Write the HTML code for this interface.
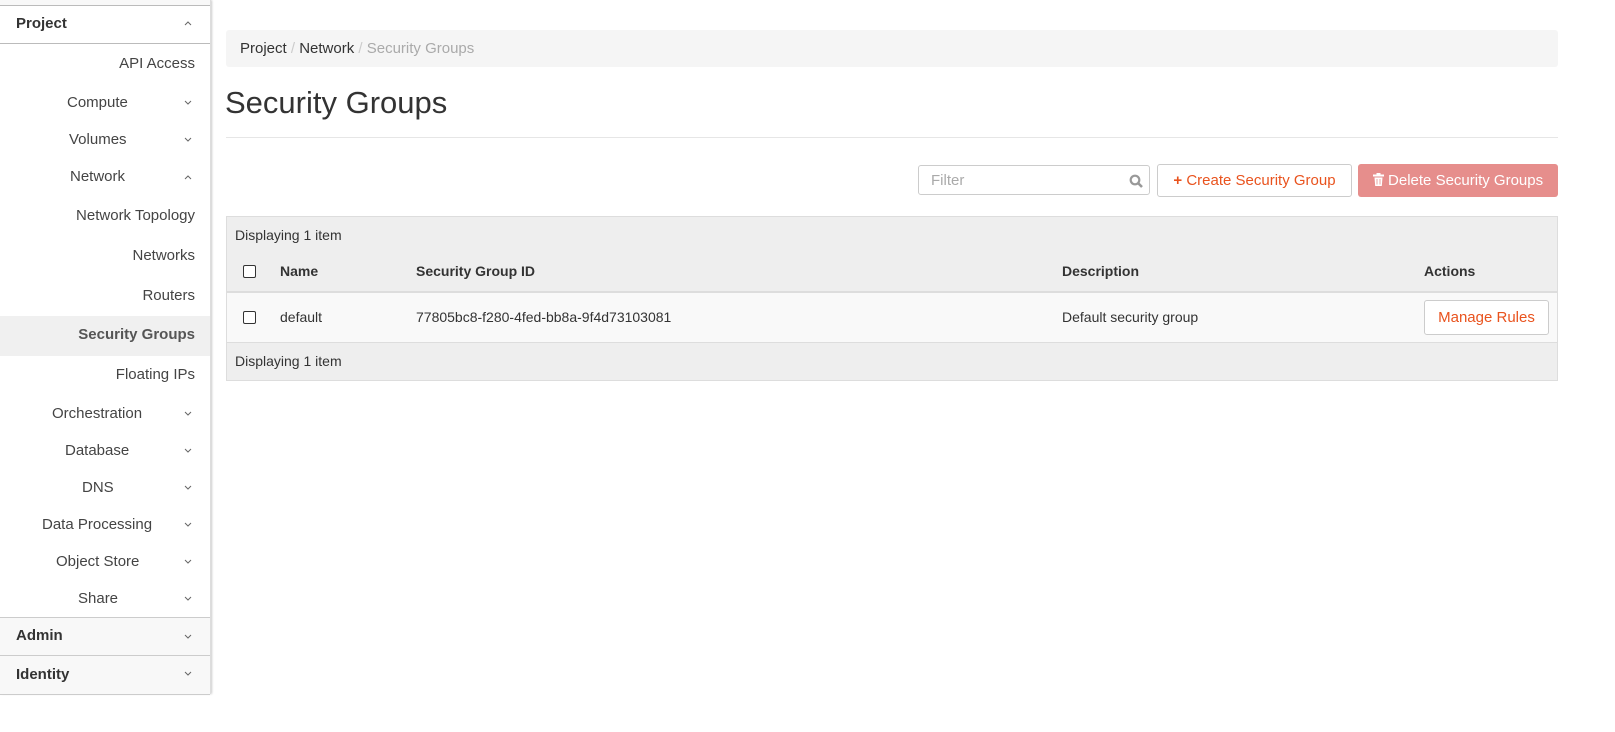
<!DOCTYPE html><html><head><style>
body{margin:0;width:1615px;height:732px;background:#fff;font-family:"Liberation Sans",sans-serif;font-size:15px;color:#333;position:relative;overflow:hidden}
.a{position:absolute;white-space:nowrap}
.sb{position:absolute;left:0;top:0;width:210px;height:694px;border-right:1px solid #ddd;box-shadow:1px 0 2px #ccc}
.it{position:absolute;color:#444;line-height:20px}
.ch{position:absolute;left:184px;width:8px;height:5px}
.hd{position:absolute;left:0;width:210px;background:#f8f8f8;border-top:1px solid #ccc;font-weight:bold;color:#333}
</style></head><body>
<svg width="0" height="0" style="position:absolute"><defs>
<symbol id="dn" viewBox="0 0 8 5"><polyline points="1,1 4,4 7,1" fill="none" stroke="#666" stroke-width="1"/></symbol>
<symbol id="up" viewBox="0 0 8 5"><polyline points="1,4 4,1 7,4" fill="none" stroke="#666" stroke-width="1"/></symbol>
</defs></svg>
<div class="sb">
<div class="a" style="left:0;top:0;width:210px;height:5px;border-bottom:1px solid #bbb;background:#f8f8f8"></div>
<div class="a" style="left:0;top:6px;width:210px;height:37px;border-bottom:1px solid #bbb;background:#fff"></div>
<div class="it" style="left:16px;top:14px;font-weight:bold;color:#333">Project</div><svg class="ch" style="top:21px"><use href="#up"/></svg>
<div class="it" style="right:15px;top:54px">API Access</div>
<div class="it" style="left:67px;top:93px">Compute</div><svg class="ch" style="top:100px"><use href="#dn"/></svg>
<div class="it" style="left:69px;top:130px">Volumes</div><svg class="ch" style="top:137px"><use href="#dn"/></svg>
<div class="it" style="left:70px;top:167px">Network</div><svg class="ch" style="top:175px"><use href="#up"/></svg>
<div class="it" style="right:15px;top:206px">Network Topology</div>
<div class="it" style="right:15px;top:246px">Networks</div>
<div class="it" style="right:15px;top:286px">Routers</div>
<div class="a" style="left:0;top:316px;width:210px;height:40px;background:#f0f0f0"></div>
<div class="it" style="right:15px;top:325px;font-weight:bold;color:#555">Security Groups</div>
<div class="it" style="right:15px;top:365px">Floating IPs</div>
<div class="it" style="left:52px;top:404px">Orchestration</div><svg class="ch" style="top:411px"><use href="#dn"/></svg>
<div class="it" style="left:65px;top:441px">Database</div><svg class="ch" style="top:448px"><use href="#dn"/></svg>
<div class="it" style="left:82px;top:478px">DNS</div><svg class="ch" style="top:485px"><use href="#dn"/></svg>
<div class="it" style="left:42px;top:515px">Data Processing</div><svg class="ch" style="top:522px"><use href="#dn"/></svg>
<div class="it" style="left:56px;top:552px">Object Store</div><svg class="ch" style="top:559px"><use href="#dn"/></svg>
<div class="it" style="left:78px;top:589px">Share</div><svg class="ch" style="top:596px"><use href="#dn"/></svg>
<div class="hd" style="top:617px;height:37px"><span class="a" style="left:16px;top:9px">Admin</span></div><svg class="ch" style="top:634px"><use href="#dn"/></svg>
<div class="hd" style="top:655px;height:38px;border-bottom:1px solid #ccc"><span class="a" style="left:16px;top:10px">Identity</span></div><svg class="ch" style="top:671px"><use href="#dn"/></svg>
</div>
<div class="a" style="left:226px;top:30px;width:1332px;height:37px;background:#f5f5f5;border-radius:3px"></div>
<div class="a" style="left:240px;top:40px;line-height:18px">Project<span style="color:#ccc"> / </span> Network<span style="color:#ccc"> / </span> <span style="color:#aaa">Security Groups</span></div>
<div class="a" style="left:225px;top:84px;font-size:31px;line-height:38px;color:#333">Security Groups</div>
<div class="a" style="left:226px;top:137px;width:1332px;height:1px;background:#e6e6e6"></div>
<div class="a" style="left:918px;top:165px;width:232px;height:30px;border:1px solid #ccc;border-radius:3px;box-sizing:border-box"><span class="a" style="left:12px;top:6px;color:#aaa">Filter</span>
<svg class="a" style="left:210px;top:8px" width="15" height="15"><circle cx="6" cy="6" r="4.3" stroke="#999" stroke-width="2.2" fill="none"/><line x1="9" y1="9" x2="13" y2="13" stroke="#999" stroke-width="2.6"/></svg></div>
<div class="a" style="left:1157px;top:164px;width:195px;height:33px;border:1px solid #ccc;border-radius:3px;box-sizing:border-box;color:#e9531e;line-height:31px;text-align:center"><b>+</b> Create Security Group</div>
<div class="a" style="left:1358px;top:164px;width:200px;height:33px;background:#e68e8c;border-radius:3px;color:#fff;line-height:33px;text-align:center"><svg width="11" height="13" style="vertical-align:-1px"><rect x="0" y="1.5" width="11" height="2" fill="#fff"/><rect x="3.5" y="0" width="4" height="2" fill="#fff"/><path d="M1.5 4.5h8l-0.7 8.5h-6.6z" fill="#fff"/><path d="M4 6v5.5M7 6v5.5" stroke="#e68e8c" stroke-width="0.8"/></svg> Delete Security Groups</div>
<div class="a" style="left:226px;top:216px;width:1332px;height:165px;border:1px solid #ddd;box-sizing:border-box;background:#eee"></div>
<div class="a" style="left:227px;top:291px;width:1330px;height:52px;background:#f9f9f9;border-top:2px solid #ddd;border-bottom:1px solid #ddd;box-sizing:border-box"></div>
<div class="a" style="left:235px;top:227px;font-size:14px">Displaying 1 item</div>
<div class="a" style="left:235px;top:353px;font-size:14px">Displaying 1 item</div>
<div class="a" style="left:243px;top:265px;width:11px;height:11px;border:1px solid #333;border-radius:2px;background:#fff"></div>
<div class="a" style="left:243px;top:311px;width:11px;height:11px;border:1px solid #333;border-radius:2px;background:#fff"></div>
<div class="a" style="top:263px;left:280px;font-weight:bold;font-size:14px">Name</div>
<div class="a" style="top:263px;left:416px;font-weight:bold;font-size:14px">Security Group ID</div>
<div class="a" style="top:263px;left:1062px;font-weight:bold;font-size:14px">Description</div>
<div class="a" style="top:263px;left:1424px;font-weight:bold;font-size:14px">Actions</div>
<div class="a" style="top:309px;left:280px;font-size:14px">default</div>
<div class="a" style="top:309px;left:416px;font-size:14px">77805bc8-f280-4fed-bb8a-9f4d73103081</div>
<div class="a" style="top:309px;left:1062px;font-size:14px">Default security group</div>
<div class="a" style="left:1424px;top:300px;width:125px;height:35px;border:1px solid #ccc;border-radius:3px;box-sizing:border-box;background:#fff;color:#e9531e;line-height:33px;text-align:center">Manage Rules</div>
</body></html>
